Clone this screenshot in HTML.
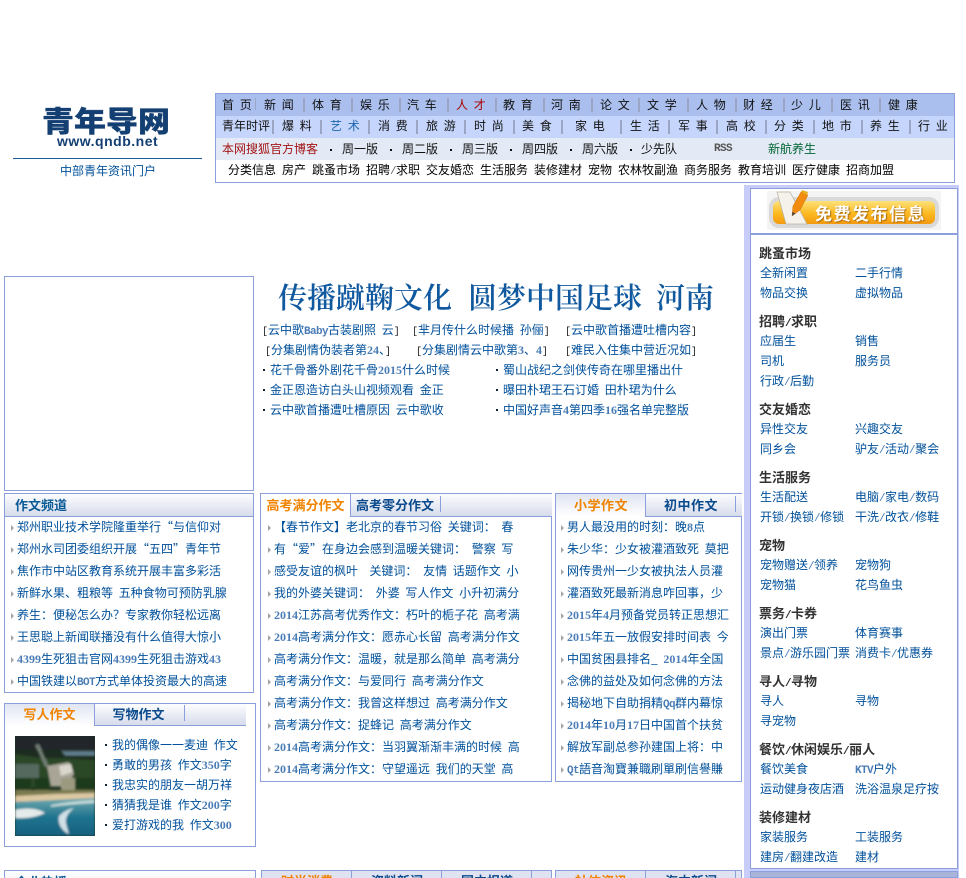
<!DOCTYPE html>
<html lang="zh-CN"><head><meta charset="utf-8"><title>青年导网</title>
<style>
html,body{margin:0;padding:0;background:#fff}
#p{position:relative;width:966px;height:878px;overflow:hidden;font:12px/20px "WenQuanYi Zen Hei","Noto Sans CJK SC","Liberation Sans",sans-serif;color:#00509b;white-space:pre;word-spacing:3px}
#p div,#p span.a,#p ul{position:absolute}
i{font:bold 12px "Liberation Serif",serif;color:#4a7cb5;word-spacing:0}
i.m{font:bold 11px "Liberation Mono",monospace;letter-spacing:-.6px}
.br{font:10px "Liberation Mono",monospace;color:#222}
.n{color:#111}
.t{color:#000}
.t i.m{color:#666;font-weight:normal}
.s{width:2px;height:14px;background:#9aa6c4}
.box{border:1px solid #8a9fdc;box-sizing:border-box;background:#fff}
ul{list-style:none;margin:0;padding:0}
.l li{height:22px;line-height:22px;position:relative}
.l li:before{content:"";position:absolute;left:-6px;top:9px;border-left:3px solid #a5a5a5;border-top:3px solid transparent;border-bottom:3px solid transparent}
.d li{height:20px;line-height:20px;position:relative}
.d li:before{content:"";position:absolute;left:-7px;top:9px;width:2px;height:2px;background:#123}
.h{height:22px;background:linear-gradient(#fdfdfe,#d7dcec)}
.tb{font-weight:bold;font-size:13px;line-height:22px;color:#0a4a8c;text-align:center}
.o{color:#f08300}
.hd{font-weight:bold;font-size:13px;color:#333;left:759px}
.hd i.m{color:#333}
.lk{left:760px}.lr{left:855px}
.lk i.m,.lr i.m{font-weight:normal}
.lr i.k{font-weight:bold}
.dt{top:149px;width:2px;height:2px;background:#111}
</style></head><body><div id="p">

<!-- logo -->
<div style="left:42px;top:104px;font:900 32px/36px 'Noto Sans CJK SC',sans-serif;color:#143f73;transform:scale(1,.88);transform-origin:0 0;-webkit-text-stroke:.4px #143f73">青年导网</div>
<div style="left:57px;top:133px;font:bold 14px/16px 'Liberation Sans',sans-serif;color:#143f73;letter-spacing:.5px">www.qndb.net</div>
<div style="left:13px;top:158px;width:189px;height:1px;background:#1b5c9c"></div>
<div style="left:60px;top:161px">中部青年资讯门户</div>

<!-- nav -->
<div style="left:215px;top:93px;width:740px;height:90px;border:1px solid #8a9fdc;box-sizing:border-box;background:#fff"></div>
<div style="left:216px;top:94px;width:738px;height:22px;background:#aabfee"></div>
<div style="left:216px;top:116px;width:738px;height:22px;background:#c5d5fb"></div>
<div style="left:216px;top:138px;width:738px;height:22px;background:#e3e9f5"></div>

<div class="n" style="top:95px;left:222px">首 页</div><div class="n" style="top:95px;left:264px">新 闻</div><div class="n" style="top:95px;left:312px">体 育</div><div class="n" style="top:95px;left:360px">娱 乐</div><div class="n" style="top:95px;left:407px">汽 车</div><div style="top:95px;left:456px;color:#a00">人 才</div><div class="n" style="top:95px;left:503px">教 育</div><div class="n" style="top:95px;left:551px">河 南</div><div class="n" style="top:95px;left:600px">论 文</div><div class="n" style="top:95px;left:647px">文 学</div><div class="n" style="top:95px;left:696px">人 物</div><div class="n" style="top:95px;left:743px">财 经</div><div class="n" style="top:95px;left:791px">少 儿</div><div class="n" style="top:95px;left:840px">医 讯</div><div class="n" style="top:95px;left:888px">健 康</div>
<div class="s" style="top:98px;left:255px;width:1px;height:12px"></div><div class="s" style="top:98px;left:303px"></div><div class="s" style="top:98px;left:351px"></div><div class="s" style="top:98px;left:399px"></div><div class="s" style="top:98px;left:447px"></div><div class="s" style="top:98px;left:495px"></div><div class="s" style="top:98px;left:543px"></div><div class="s" style="top:98px;left:591px"></div><div class="s" style="top:98px;left:638px"></div><div class="s" style="top:98px;left:687px"></div><div class="s" style="top:98px;left:735px"></div><div class="s" style="top:98px;left:783px"></div><div class="s" style="top:98px;left:831px"></div><div class="s" style="top:98px;left:879px"></div>

<div class="n" style="top:116px;left:222px">青年时评</div><div class="n" style="top:116px;left:282px">爆 料</div><div style="top:116px;left:330px;color:#1f66ad">艺 术</div><div class="n" style="top:116px;left:378px">消 费</div><div class="n" style="top:116px;left:426px">旅 游</div><div class="n" style="top:116px;left:474px">时 尚</div><div class="n" style="top:116px;left:522px">美 食</div><div class="n" style="top:116px;left:575px">家 电</div><div class="n" style="top:116px;left:630px">生 活</div><div class="n" style="top:116px;left:678px">军 事</div><div class="n" style="top:116px;left:726px">高 校</div><div class="n" style="top:116px;left:774px">分 类</div><div class="n" style="top:116px;left:822px">地 市</div><div class="n" style="top:116px;left:870px">养 生</div><div class="n" style="top:116px;left:918px">行 业</div>
<div class="s" style="top:120px;left:272px"></div><div class="s" style="top:120px;left:320px"></div><div class="s" style="top:120px;left:368px"></div><div class="s" style="top:120px;left:416px"></div><div class="s" style="top:120px;left:464px"></div><div class="s" style="top:120px;left:513px"></div><div class="s" style="top:120px;left:561px"></div><div class="s" style="top:120px;left:620px"></div><div class="s" style="top:120px;left:668px"></div><div class="s" style="top:120px;left:716px"></div><div class="s" style="top:120px;left:765px"></div><div class="s" style="top:120px;left:813px"></div><div class="s" style="top:120px;left:861px"></div><div class="s" style="top:120px;left:909px"></div>

<div style="top:139px;left:222px;color:#a31515">本网搜狐官方博客</div>
<div class="dt" style="left:330px"></div><div class="n" style="top:139px;left:342px">周一版</div>
<div class="dt" style="left:390px"></div><div class="n" style="top:139px;left:402px">周二版</div>
<div class="dt" style="left:450px"></div><div class="n" style="top:139px;left:462px">周三版</div>
<div class="dt" style="left:510px"></div><div class="n" style="top:139px;left:522px">周四版</div>
<div class="dt" style="left:570px"></div><div class="n" style="top:139px;left:582px">周六版</div>
<div class="dt" style="left:630px"></div><div class="n" style="top:139px;left:641px">少先队</div>
<div style="top:139px;left:714px;font:bold 11px/20px 'Liberation Mono',monospace;letter-spacing:-.6px;color:#555">RSS</div>
<div style="top:139px;left:768px;color:#006633">新航养生</div>

<div class="t" style="top:160px;left:228px">分类信息</div><div class="t" style="top:160px;left:282px">房产</div><div class="t" style="top:160px;left:312px">跳蚤市场</div><div class="t" style="top:160px;left:366px">招聘<i class="m">/</i>求职</div><div class="t" style="top:160px;left:426px">交友婚恋</div><div class="t" style="top:160px;left:480px">生活服务</div><div class="t" style="top:160px;left:534px">装修建材</div><div class="t" style="top:160px;left:588px">宠物</div><div class="t" style="top:160px;left:618px">农林牧副渔</div><div class="t" style="top:160px;left:684px">商务服务</div><div class="t" style="top:160px;left:738px">教育培训</div><div class="t" style="top:160px;left:792px">医疗健康</div><div class="t" style="top:160px;left:846px">招商加盟</div>

<!-- left ad -->
<div class="box" style="left:4px;top:276px;width:250px;height:215px"></div>

<!-- headline -->
<div style="left:278px;top:278px;font:600 29px/38px 'Noto Serif CJK SC',serif;color:#11599f">传播蹴鞠文化</div>
<div style="left:468px;top:278px;font:600 29px/38px 'Noto Serif CJK SC',serif;color:#11599f">圆梦中国足球</div>
<div style="left:656px;top:278px;font:600 29px/38px 'Noto Serif CJK SC',serif;color:#11599f">河南</div>

<div style="left:262px;top:320px"><span class="br">[</span>云中歌<i class="m">Baby</i>古装剧照 云<span class="br">]</span></div>
<div style="left:412px;top:320px"><span class="br">[</span>芈月传什么时候播 孙俪<span class="br">]</span></div>
<div style="left:565px;top:320px"><span class="br">[</span>云中歌首播遭吐槽内容<span class="br">]</span></div>
<div style="left:265px;top:340px"><span class="br">[</span>分集剧情伪装者第<i>24</i>、<span class="br">]</span></div>
<div style="left:416px;top:340px"><span class="br">[</span>分集剧情云中歌第<i>3</i>、<i>4</i><span class="br">]</span></div>
<div style="left:565px;top:340px"><span class="br">[</span>难民入住集中营近况如<span class="br">]</span></div>
<ul class="d" style="left:270px;top:360px"><li>花千骨番外剧花千骨<i>2015</i>什么时候</li><li>金正恩造访白头山视频观看 金正</li><li>云中歌首播遭吐槽原因 云中歌收</li></ul>
<ul class="d" style="left:503px;top:360px"><li>蜀山战纪之剑侠传奇在哪里播出什</li><li>曝田朴珺王石订婚 田朴珺为什么</li><li>中国好声音<i>4</i>第四季<i>16</i>强名单完整版</li></ul>

<!-- 作文频道 -->
<div class="box" style="left:4px;top:493px;width:250px;height:200px"></div>
<div class="h" style="left:5px;top:494px;width:248px;border-bottom:1px solid #8a9fdc"></div>
<div style="left:15px;top:494px;font-weight:bold;font-size:13px;line-height:22px;color:#0a5a96">作文频道</div>
<ul class="l" style="left:17px;top:516px"><li>郑州职业技术学院隆重举行“与信仰对</li><li>郑州水司团委组织开展“五四”青年节</li><li>焦作市中站区教育系统开展丰富多彩活</li><li>新鲜水果、粗粮等 五种食物可预防乳腺</li><li>养生：便秘怎么办？专家教你轻松远离</li><li>王思聪上新闻联播没有什么值得大惊小</li><li><i>4399</i>生死狙击官网<i>4399</i>生死狙击游戏<i>43</i></li><li>中国铁建以<i class="m">BOT</i>方式单体投资最大的高速</li></ul>

<!-- 写人作文 -->
<div class="box" style="left:4px;top:703px;width:252px;height:144px"></div>
<div style="left:5px;top:704px;width:89px;height:22px;background:linear-gradient(#e0e5f2,#fff)"></div>
<div class="h" style="left:94px;top:704px;width:151px;height:21px;border-left:1px solid #8a9fdc;border-bottom:1px solid #8a9fdc"></div>
<div class="tb o" style="left:5px;top:703px;width:89px">写人作文</div>
<div class="tb" style="left:94px;top:703px;width:89px">写物作文</div>
<div style="left:184px;top:705px;width:1px;height:16px;background:#8a9fdc"></div>
<svg style="position:absolute;left:15px;top:736px" width="80" height="100" viewBox="0 0 80 100"><defs><linearGradient id="w" x1="0" y1="0" x2="0" y2="1"><stop offset="0" stop-color="#6fa9ae"/><stop offset=".5" stop-color="#20748f"/><stop offset="1" stop-color="#15607f"/></linearGradient><filter id="f"><feGaussianBlur stdDeviation="1"/></filter></defs><rect width="80" height="100" fill="#1d2c20"/><g filter="url(#f)"><rect width="80" height="14" fill="#20262a"/><path d="M46 15h34v5H50z" fill="#5f7a8c"/><path d="M0 18L26 22 46 22 80 24V52H0z" fill="#2c4628"/><path d="M24 8l10 22-4 1L20 9z" fill="#6f7c72"/><path d="M0 28h24v14H0z" fill="#55695f"/><path d="M32 30l22-4 5 12-8 12H36z" fill="#a8a596"/><path d="M44 30l12-2 2 8-12 4z" fill="#d9d6cc"/><rect x="46" y="42" width="14" height="12" fill="#9b9a80"/><path d="M0 42h16v12H0zM60 42h20v14H60zM20 42h14v12H20z" fill="#1f3a1e"/><path d="M0 58L40 56 80 54V63L0 66z" fill="#dcc8a2"/><path d="M0 54h80v3L40 58 0 60z" fill="#7a7a50"/><path d="M0 66L80 62V100H0z" fill="url(#w)"/><path d="M0 74c14-3 24-1 30 3-8 4-20 6-30 5z" fill="#e4eaea"/><path d="M44 80c5-5 10-7 15-8-5 4-9 9-8 15 1 4 2 8 3 11-6-2-12-10-10-18z" fill="#cfe0e6"/><path d="M36 69c14-3 28-4 44-5v3c-16 1-30 2-44 4z" fill="#c4dad9"/></g></svg>
<ul class="d" style="left:112px;top:735px"><li>我的偶像一一麦迪 作文</li><li>勇敢的男孩 作文<i>350</i>字</li><li>我忠实的朋友一胡万祥</li><li>猜猜我是谁 作文<i>200</i>字</li><li>爱打游戏的我 作文<i>300</i></li></ul>

<!-- center -->
<div class="box" style="left:260px;top:493px;width:292px;height:289px"></div>
<div class="h" style="left:350px;top:494px;width:201px;border-left:1px solid #8a9fdc;border-bottom:1px solid #8a9fdc"></div>
<div class="tb o" style="left:261px;top:494px;width:89px">高考满分作文</div>
<div class="tb" style="left:350px;top:494px;width:90px">高考零分作文</div>
<div style="left:440px;top:496px;width:1px;height:16px;background:#8a9fdc"></div>
<ul class="l" style="left:274px;top:516px"><li>【春节作文】老北京的春节习俗 关键词： 春</li><li>有“爱”在身边会感到温暖关键词： 警察 写</li><li>感受友谊的枫叶  关键词： 友情 话题作文 小</li><li>我的外婆关键词： 外婆 写人作文 小升初满分</li><li><i>2014</i>江苏高考优秀作文：朽叶的栀子花 高考满</li><li><i>2014</i>高考满分作文：愿赤心长留 高考满分作文</li><li>高考满分作文：温暖，就是那么简单 高考满分</li><li>高考满分作文：与爱同行 高考满分作文</li><li>高考满分作文：我曾这样想过 高考满分作文</li><li>高考满分作文：捉蜂记 高考满分作文</li><li><i>2014</i>高考满分作文：当羽翼渐渐丰满的时候 高</li><li><i>2014</i>高考满分作文：守望遥远 我们的天堂 高</li></ul>

<!-- right mid -->
<div class="box" style="left:555px;top:493px;width:187px;height:289px"></div>
<div style="left:556px;top:494px;width:89px;height:23px;background:linear-gradient(#e0e5f2,#fff)"></div>
<div class="h" style="left:645px;top:494px;width:96px;border-left:1px solid #8a9fdc;border-bottom:1px solid #8a9fdc"></div>
<div class="tb o" style="left:556px;top:494px;width:90px;letter-spacing:.5px">小学作文</div>
<div class="tb" style="left:646px;top:494px;width:90px;letter-spacing:.5px">初中作文</div>
<div style="left:735px;top:496px;width:1px;height:16px;background:#8a9fdc"></div>
<ul class="l" style="left:567px;top:516px"><li>男人最没用的时刻：晚<i>8</i>点</li><li>朱少华：少女被灌酒致死 莫把</li><li>网传贵州一少女被执法人员灌</li><li>灌酒致死最新消息咋回事，少</li><li><i>2015</i>年<i>4</i>月预备党员转正思想汇</li><li><i>2015</i>年五一放假安排时间表 今</li><li>中国贫困县排名_ <i>2014</i>年全国</li><li>念佛的益处及如何念佛的方法</li><li>揭秘地下自助捐精<i class="m">Qq</i>群内幕惊</li><li><i>2014</i>年<i>10</i>月<i>17</i>日中国首个扶贫</li><li>解放军副总参孙建国上将：中</li><li><i class="m">Qt</i>語音淘寶兼職刷單刷信譽賺</li></ul>

<!-- sidebar -->
<div style="left:744px;top:185px;width:215px;height:693px;background:#c8ccf8"></div>
<div class="box" style="left:750px;top:188px;width:208px;height:681px"></div>
<div style="left:751px;top:233px;width:206px;height:2px;background:#8a9fdc"></div>
<div style="left:767px;top:191px;width:174px;height:39px;background:#f4f4f4"></div>
<div style="left:769px;top:197px;width:170px;height:31px;border-radius:10px;background:#d9d9d9"></div>
<div style="left:773px;top:201px;width:162px;height:23px;border-radius:6px;background:linear-gradient(#fde27a,#fcb81f 55%,#f49a10)"></div>
<svg style="position:absolute;left:775px;top:189px" width="44" height="38" viewBox="0 0 44 38"><path d="M2 3H15L32 35H11z" fill="#f4f2ea" stroke="#b8b2a0" stroke-width=".7"/><path d="M17 27L18 17 26 3 33 6 25 21z" fill="#f28c10" stroke="#cf6f00" stroke-width=".5"/><path d="M26 3l1-2 6 2-1 3z" fill="#e8b020"/><path d="M17 27l.5-4 3 1.500z" fill="#444"/></svg>
<div style="left:815px;top:201px;font:bold 17px/24px 'Noto Sans CJK SC',sans-serif;color:#fff;letter-spacing:1.5px;text-shadow:1px 1px 1px #a86a10">免费发布信息</div>

<div class="hd" style="top:243px">跳蚤市场</div><div class="lk" style="top:263px">全新闲置</div><div class="lr" style="top:263px">二手行情</div><div class="lk" style="top:283px">物品交换</div><div class="lr" style="top:283px">虚拟物品</div>
<div class="hd" style="top:311px">招聘<i class="m">/</i>求职</div><div class="lk" style="top:331px">应届生</div><div class="lr" style="top:331px">销售</div><div class="lk" style="top:351px">司机</div><div class="lr" style="top:351px">服务员</div><div class="lk" style="top:371px">行政<i class="m">/</i>后勤</div>
<div class="hd" style="top:399px">交友婚恋</div><div class="lk" style="top:419px">异性交友</div><div class="lr" style="top:419px">兴趣交友</div><div class="lk" style="top:439px">同乡会</div><div class="lr" style="top:439px">驴友<i class="m">/</i>活动<i class="m">/</i>聚会</div>
<div class="hd" style="top:467px">生活服务</div><div class="lk" style="top:487px">生活配送</div><div class="lr" style="top:487px">电脑<i class="m">/</i>家电<i class="m">/</i>数码</div><div class="lk" style="top:507px">开锁<i class="m">/</i>换锁<i class="m">/</i>修锁</div><div class="lr" style="top:507px">干洗<i class="m">/</i>改衣<i class="m">/</i>修鞋</div>
<div class="hd" style="top:535px">宠物</div><div class="lk" style="top:555px">宠物赠送<i class="m">/</i>领养</div><div class="lr" style="top:555px">宠物狗</div><div class="lk" style="top:575px">宠物猫</div><div class="lr" style="top:575px">花鸟鱼虫</div>
<div class="hd" style="top:603px">票务<i class="m">/</i>卡券</div><div class="lk" style="top:623px">演出门票</div><div class="lr" style="top:623px">体育赛事</div><div class="lk" style="top:643px">景点<i class="m">/</i>游乐园门票</div><div class="lr" style="top:643px">消费卡<i class="m">/</i>优惠券</div>
<div class="hd" style="top:671px">寻人<i class="m">/</i>寻物</div><div class="lk" style="top:691px">寻人</div><div class="lr" style="top:691px">寻物</div><div class="lk" style="top:711px">寻宠物</div>
<div class="hd" style="top:739px">餐饮<i class="m">/</i>休闲娱乐<i class="m">/</i>丽人</div><div class="lk" style="top:759px">餐饮美食</div><div class="lr" style="top:759px"><i class="m k">KTV</i>户外</div><div class="lk" style="top:779px">运动健身夜店酒</div><div class="lr" style="top:779px">洗浴温泉足疗按</div>
<div class="hd" style="top:807px">装修建材</div><div class="lk" style="top:827px">家装服务</div><div class="lr" style="top:827px">工装服务</div><div class="lk" style="top:847px">建房<i class="m">/</i>翻建改造</div><div class="lr" style="top:847px">建材</div>

<!-- bottom row -->
<div class="box" style="left:4px;top:870px;width:252px;height:30px"></div>
<div style="left:5px;top:871px;width:250px;height:22px;background:linear-gradient(#fff,#e6e9f3)"></div>
<div style="left:15px;top:871px;font-weight:bold;font-size:13px;line-height:22px;color:#0a5a96">企业热播</div>
<div class="box" style="left:261px;top:870px;width:291px;height:30px"></div>
<div style="left:262px;top:871px;width:289px;height:10px;background:#dfe3f1"></div>
<div class="tb o" style="left:262px;top:870px;width:90px">时尚消费</div>
<div class="tb" style="left:352px;top:870px;width:90px">资料新闻</div>
<div class="tb" style="left:442px;top:870px;width:90px">国内报道</div>
<div style="left:351px;top:871px;width:1px;height:10px;background:#8a9fdc"></div><div style="left:441px;top:871px;width:1px;height:10px;background:#8a9fdc"></div><div style="left:531px;top:871px;width:1px;height:10px;background:#8a9fdc"></div>
<div class="box" style="left:555px;top:870px;width:187px;height:30px"></div>
<div style="left:556px;top:871px;width:185px;height:10px;background:#dfe3f1"></div>
<div class="tb o" style="left:556px;top:870px;width:90px">社体资讯</div>
<div class="tb" style="left:646px;top:870px;width:90px">海内新闻</div>
<div style="left:645px;top:871px;width:1px;height:10px;background:#8a9fdc"></div><div style="left:735px;top:871px;width:1px;height:10px;background:#8a9fdc"></div>
<div style="left:750px;top:871px;width:208px;height:7px;background:#a9b5d8;border:1px solid #8a9fdc;box-sizing:border-box"></div>
</div></body></html>
